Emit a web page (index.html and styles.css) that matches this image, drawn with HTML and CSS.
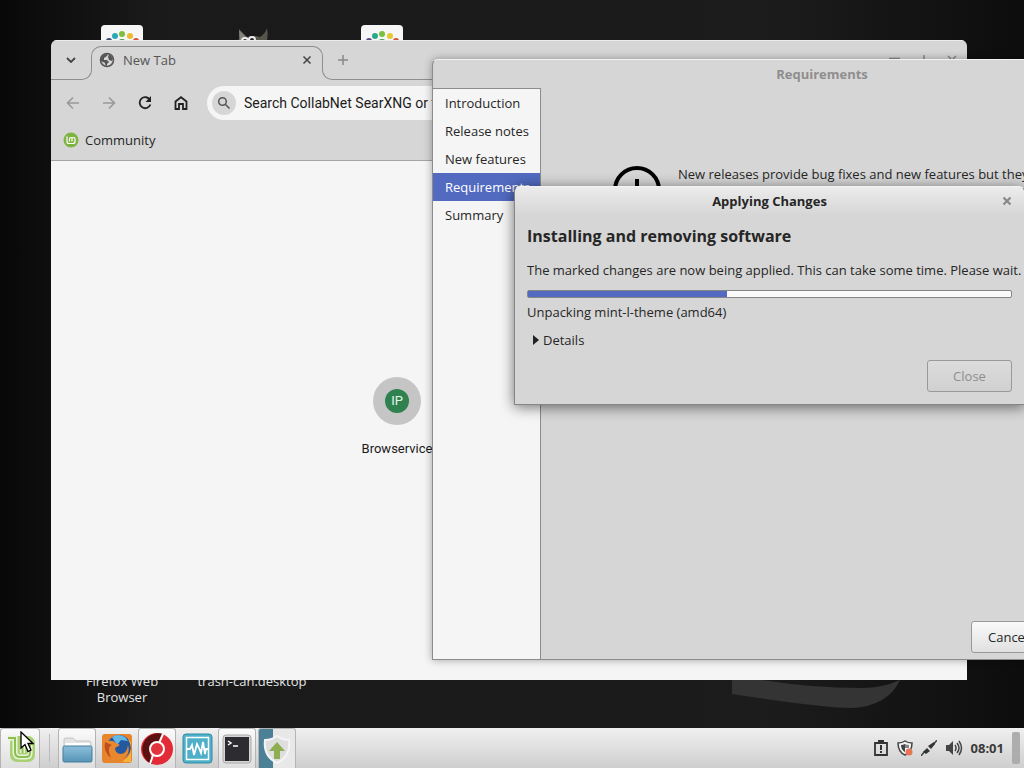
FILE: index.html
```html
<!DOCTYPE html>
<html lang="en">
<head>
<meta charset="utf-8">
<title>Desktop</title>
<link rel="stylesheet" href="styles.css">
</head>
<body>
<main class="desktop">
  <svg class="wallpaper-mark" viewBox="0 0 170 40" aria-hidden="true"><path d="M0 0H30Q80 8 130 8Q150 8 168 0Q156 26 120 28Q90 28 0 14Z" fill="#343434"/></svg>

  <div class="shortcut shortcut-a" aria-hidden="true">
    <svg class="tile" viewBox="0 0 42 42"><rect width="42" height="42" rx="4" fill="#f6f6f6"/><circle cx="14" cy="11" r="3" fill="#28a9b8"/><circle cx="21" cy="9" r="3" fill="#7cbf3f"/><circle cx="29" cy="11" r="3" fill="#efb932"/><circle cx="8" cy="16" r="3" fill="#3b4a73"/><circle cx="35" cy="16" r="3" fill="#d1543b"/><circle cx="21" cy="18" r="4" fill="#4b9a46"/></svg>
  </div>
  <div class="shortcut shortcut-b" aria-hidden="true">
    <svg class="tile" viewBox="0 0 42 42"><path d="M9 4L17 12Q24 10 30 12Q35 9 37 3Q39 14 35 22H7L3 19L9 14Z" fill="#56544b"/><path d="M9 5L17 13L10 18Z" fill="#85837b"/><circle cx="15" cy="16" r="4" fill="#eee"/><circle cx="22" cy="15" r="4" fill="#eee"/><circle cx="15" cy="16" r="2" fill="#222"/><circle cx="22" cy="15" r="2" fill="#222"/></svg>
  </div>
  <div class="shortcut shortcut-c" aria-hidden="true">
    <svg class="tile" viewBox="0 0 42 42"><rect width="42" height="42" rx="4" fill="#f6f6f6"/><circle cx="14" cy="11" r="3" fill="#28a98a"/><circle cx="21" cy="9" r="3" fill="#7cbf3f"/><circle cx="29" cy="11" r="3" fill="#e6c932"/><circle cx="8" cy="16" r="3" fill="#5b4a83"/><circle cx="35" cy="16" r="3" fill="#d1543b"/><circle cx="21" cy="18" r="4" fill="#4b9a46"/></svg>
  </div>
  <div class="shortcut-label label-firefox">Firefox Web Browser</div>
  <div class="shortcut-label label-trash">trash-can.desktop</div>

  <section class="window browser" aria-label="Browser">
    <header class="tab-strip">
      <button class="tab-menu" aria-label="Search tabs"><svg width="10" height="6" viewBox="0 0 10 6"><path d="M1 1L5 5L9 1" fill="none" stroke="#444" stroke-width="1.800"/></svg></button>
      <div class="tab">
        <svg width="16" height="16" viewBox="0 0 16 16"><circle cx="8" cy="8" r="6.500" fill="#d6d6d6" stroke="#555" stroke-width="1.600"/><path d="M2 7Q3 2 9 2L8 4L5 6V8L8 8L10 10L8 12V14Q6 14 6 11L2 9Z" fill="#555"/><path d="M10 2L14 6L13 9L10 8L9 5Z" fill="#555"/></svg>
        <span class="tab-title">New Tab</span>
        <button class="plain" aria-label="Close tab"><svg width="10" height="10" viewBox="0 0 10 10"><path d="M1.500 1.500L8.500 8.500M8.500 1.500L1.500 8.500" stroke="#444" stroke-width="1.500"/></svg></button>
      </div>
      <div class="strip-rest">
        <button class="plain" aria-label="New tab"><svg width="12" height="12" viewBox="0 0 12 12"><path d="M6 1V11M1 6H11" stroke="#888" stroke-width="1.500"/></svg></button>
      </div>
      <div class="caption-buttons" aria-hidden="true">
        <svg width="76" height="10" viewBox="0 0 76 10"><path d="M2 3.500H13M37 0V10M33 5H41M61 1L69 9M69 1L61 9" stroke="#888" stroke-width="1.500"/></svg>
      </div>
    </header>
    <div class="toolbar">
      <button class="plain tool" aria-label="Back"><svg width="14" height="14" viewBox="0 0 14 14"><path d="M13 7H2M7 1.500L1.500 7L7 12.500" fill="none" stroke="#999" stroke-width="1.600"/></svg></button>
      <button class="plain tool" aria-label="Forward"><svg width="14" height="14" viewBox="0 0 14 14"><path d="M1 7H12M7 1.500L12.500 7L7 12.500" fill="none" stroke="#999" stroke-width="1.600"/></svg></button>
      <button class="plain tool" aria-label="Reload"><svg width="14" height="14" viewBox="0 0 14 14"><path d="M12 4A5.500 5.500 0 1 0 12.400 8.500" fill="none" stroke="#222" stroke-width="1.800"/><path d="M13 0V6H7.500Z" fill="#222"/></svg></button>
      <button class="plain tool" aria-label="Home"><svg width="14" height="14" viewBox="0 0 14 14"><path d="M1.500 5.500L7 1.200L12.500 5.500V13H9V8H5V13H1.500Z" fill="none" stroke="#222" stroke-width="1.800"/></svg></button>
      <label class="omnibox">
        <span class="search-badge"><svg width="14" height="14" viewBox="0 0 14 14"><circle cx="5.500" cy="5.500" r="3.800" fill="none" stroke="#555" stroke-width="1.500"/><path d="M8.500 8.500L12.500 12.500" stroke="#555" stroke-width="1.600"/></svg></span>
        <input class="omnibox-input" type="text" aria-label="Address and search" placeholder="Search CollabNet SearXNG or type a URL">
      </label>
    </div>
    <nav class="bookmarks">
      <a class="bookmark" href="#"><svg width="16" height="16" viewBox="0 0 16 16"><circle cx="8" cy="8" r="7.500" fill="#7fb342"/><path d="M4 4.500V9.500Q4 11.500 6 11.500H10Q12 11.500 12 9.500V7Q12 5.500 10.500 5.500T9 7V9.500M9 7Q9 5.500 7.800 5.500T6.500 7V9.500" fill="none" stroke="#fff" stroke-width="1.200"/></svg>Community</a>
    </nav>
    <div class="page">
      <a class="site" href="#"><span class="site-ring"><span class="site-badge">IP</span></span>Browservice</a>
    </div>
  </section>

  <section class="window upgrade" aria-label="Requirements">
    <h1 class="caption caption-idle">Requirements</h1>
    <div class="upgrade-body">
      <nav class="steps">
        <a class="step" href="#">Introduction</a>
        <a class="step" href="#">Release notes</a>
        <a class="step" href="#">New features</a>
        <a class="step step-current" href="#" aria-current="step">Requirements</a>
        <a class="step" href="#">Summary</a>
      </nav>
      <div class="upgrade-content">
        <div class="notice">
          <svg width="48" height="48" viewBox="0 0 48 48"><circle cx="24" cy="24" r="22" fill="none" stroke="#000" stroke-width="4"/><path d="M24 13V28M24 32V36" stroke="#000" stroke-width="4"/></svg>
          <p class="notice-text">New releases provide bug fixes and new features but they also sometimes<br>introduce new issues. Usually these are rare.</p>
        </div>
        <div class="actions"><button class="button">Cancel</button></div>
      </div>
    </div>
  </section>

  <section class="window progress-dialog" role="dialog" aria-labelledby="dialog-title">
    <header class="dialog-header">
      <h1 class="caption" id="dialog-title">Applying Changes</h1>
      <button class="plain dialog-close" aria-label="Close dialog"><svg width="10" height="10" viewBox="0 0 10 10"><path d="M1.500 1.500L8.500 8.500M8.500 1.500L1.500 8.500" stroke="#888" stroke-width="2.200"/></svg></button>
    </header>
    <div class="dialog-body">
      <h2 class="headline">Installing and removing software</h2>
      <p class="message">The marked changes are now being applied. This can take some time. Please wait.</p>
      <div class="meter" role="progressbar" aria-valuenow="41" aria-valuemin="0" aria-valuemax="100" aria-label="Progress"><div class="meter-fill" style="width:41.2%"></div></div>
      <p class="status">Unpacking mint-l-theme (amd64)</p>
      <button class="plain details"><svg width="6" height="10" viewBox="0 0 6 10"><path d="M0 0L6 5L0 10Z" fill="#222"/></svg>Details</button>
      <div class="dialog-actions"><button class="button button-close" disabled>Close</button></div>
    </div>
  </section>
</main>

<footer class="panel">
  <button class="task task-open menu-button" aria-label="Menu"><svg width="32" height="32" viewBox="0 0 32 32"><rect x="6" y="3" width="25" height="26" rx="7" fill="#a9d173"/><path d="M4 5H11V19Q11 24 16 24H22Q26 24 26 20V12M18.500 20V11" fill="none" stroke="#e9f4da" stroke-width="5"/><path d="M4 5H11V19Q11 24 16 24H22Q26 24 26 20V12M18.500 20V11" fill="none" stroke="#8cbd50" stroke-width="2"/></svg></button>
  <span class="divider"></span>
  <button class="task task-open" aria-label="Files"><svg width="32" height="32" viewBox="0 0 32 32"><defs><linearGradient id="fold" x2="0" y2="1"><stop stop-color="#8cc0dc"/><stop offset="1" stop-color="#5794b6"/></linearGradient></defs><path d="M3 7Q3 5 5 5H12L15 8H28Q30 8 30 10V25H3Z" fill="#e4e4e4" stroke="#c4c4c4"/><path d="M4 10H29V15H4Z" fill="#fff"/><rect x="2" y="13" width="29" height="16" rx="1.500" fill="url(#fold)" stroke="#447d9d"/></svg></button>
  <button class="task" aria-label="Firefox"><svg width="32" height="32" viewBox="0 0 32 32"><rect x="1" y="2" width="30" height="29" rx="3" fill="#e8852c"/><circle cx="18" cy="15" r="12" fill="#2459a0"/><path d="M11 5Q17 1 24 5L27 9L20 8L16 13Z" fill="#65b8e5"/><path d="M2 4L7 9Q12 8 15 11L19 13L14 16Q14 21 19 22Q26 22 27 13Q30 22 22 27Q12 32 5 23Q1 15 2 4Z" fill="#e8872e"/><path d="M4 10Q2 20 10 26Q5 15 11 13Z" fill="#bd4e20"/><path d="M27 7Q33 17 27 25L21 30H30V10Z" fill="#f5b43c"/></svg></button>
  <button class="task task-open" aria-label="Chromium"><svg width="32" height="32" viewBox="0 0 32 32"><circle cx="16" cy="16" r="16" fill="#e32b38"/><path d="M11 31A16 16 0 0 1 22 1L19 9L9 20Z" fill="#5b1111"/><path d="M22 1L18 10M12 22L9 31" stroke="#fff" stroke-width="2"/><circle cx="16" cy="16" r="7" fill="#e3343e" stroke="#fff" stroke-width="2"/></svg></button>
  <button class="task" aria-label="System Monitor"><svg width="32" height="32" viewBox="0 0 32 32"><rect x="2" y="2" width="29" height="29" rx="3" fill="#4db0c8" stroke="#318ca4"/><rect x="5.500" y="5.500" width="22" height="22" fill="none" stroke="#fff" stroke-width="1.500"/><path d="M6 17H9L11 13L13 23L16 12L18 16L20 21L22 10L24 22L25 17H27" fill="none" stroke="#fff" stroke-width="1.800"/></svg></button>
  <button class="task task-open" aria-label="Terminal"><svg width="32" height="32" viewBox="0 0 32 32"><rect x="2" y="2" width="28" height="28" rx="3" fill="#d5d5d5" stroke="#aaa"/><rect x="4" y="4" width="24" height="24" fill="#2c2c31"/><path d="M7 8L10 10L7 12M12 13H17" fill="none" stroke="#fff" stroke-width="1.500"/></svg></button>
  <button class="task task-open task-progress" aria-label="Update Manager"><svg width="32" height="32" viewBox="0 0 32 32"><path d="M16 3Q21 7 28 7Q30 23 16 30Q2 23 4 7Q11 7 16 3Z" fill="#dedede" stroke="#f4f4f4" stroke-width="2"/><path d="M16 9L24 18H19V26H13V18H8Z" fill="#8fae52"/></svg></button>
  <div class="tray">
    <svg width="16" height="16" viewBox="0 0 16 16"><path d="M2 3H14V15H2Z" fill="none" stroke="#333" stroke-width="1.800"/><path d="M5 0H11V3H5ZM7 5H9V10H7ZM7 11H9V13H7Z" fill="#333"/></svg>
    <svg width="16" height="16" viewBox="0 0 16 16"><path d="M8 1Q11 3 15 3Q15 12 8 15Q1 12 1 3Q5 3 8 1Z" fill="#f3f3f3" stroke="#444" stroke-width="1.500"/><path d="M8 4V12Q4 10 4 5Q6 5 8 4Z" fill="#444"/><path d="M8 4Q10 5 12 5V8H8Z" fill="#888"/><circle cx="12" cy="12" r="3.500" fill="#e87555"/></svg>
    <svg width="16" height="16" viewBox="0 0 16 16"><path d="M0 16L4 11M12 5L16 0" stroke="#444" stroke-width="1.500"/><path d="M2 12L6 8L9 11L5 14ZM7 6L13 2L14 4L10 9Z" fill="#333"/></svg>
    <svg width="18" height="16" viewBox="0 0 18 16"><path d="M1 5H4L8 1V15L4 11H1Z" fill="#444"/><path d="M10 5Q12 8 10 11M12 3Q16 8 12 13M14 1Q19 8 14 15" fill="none" stroke="#444" stroke-width="1.500"/></svg>
    <time class="clock">08:01</time>
    <span class="show-desktop"></span>
  </div>
</footer>
<svg class="cursor" width="14" height="22" viewBox="0 0 14 22" aria-hidden="true"><path d="M1 1V17L5 13.500L8 20.500L11 19L8 12.500H13Z" fill="#fff" stroke="#000" stroke-width="1.300"/></svg>
</body>
</html>
```
FILE: styles.css
```css
* { box-sizing: border-box; }
body {
  margin: 0;
  height: 100vh;
  display: flex;
  flex-direction: column;
  overflow: hidden;
  font: 13px/20px "Open Sans", "Noto Sans", sans-serif;
  color: #262626;
}
h1, h2, p { margin: 0; }
a { color: inherit; text-decoration: none; }
svg { display: block; flex: none; }
button { font: inherit; color: inherit; }
.plain { border: 0; background: none; padding: 0; display: flex; align-items: center; justify-content: center; }

.desktop {
  flex: 1;
  position: relative;
  overflow: hidden;
  background: linear-gradient(90deg, #080808, #1a1a1a 15%, #1c1c1c 75%, #0d0d0d);
}
.wallpaper-mark { position: absolute; left: 732px; bottom: 8px; width: 170px; }
.shortcut { position: absolute; top: 25px; }
.tile { width: 42px; height: 42px; }
.shortcut-a { left: 101px; }
.shortcut-b { left: 230px; }
.shortcut-c { left: 361px; }
.shortcut-label {
  position: absolute;
  top: 673px;
  width: 120px;
  text-align: center;
  line-height: 16px;
  color: #e4e4e4;
}
.label-firefox { left: 62px; padding: 0 16px; }
.label-trash { left: 192px; }

.window { position: absolute; display: flex; flex-direction: column; background: #d6d6d6; }

.browser { left: 51px; right: 57px; top: 40px; bottom: 48px; border-radius: 6px 6px 0 0; overflow: hidden; }
.tab-strip { display: flex; height: 40px; border-top: 1px solid #ececec; }
.tab-menu {
  width: 41px;
  height: 24px;
  margin-top: 15px;
  padding: 0 0 16px;
  display: flex;
  align-items: center;
  justify-content: center;
  background: none;
  border: 0 solid #8e8e8e;
  border-width: 0 1px 1px 0;
  border-radius: 0 0 10px 0;
}
.tab {
  position: relative;
  width: 232px;
  height: 28px;
  margin: 5px 0 0 -1px;
  padding: 0 11px 0 8px;
  display: flex;
  align-items: center;
  gap: 8px;
}
.tab::before {
  content: "";
  position: absolute;
  inset: 0 0 16px;
  border: 1px solid #8e8e8e;
  border-bottom: 0;
  border-radius: 10px 10px 0 0;
}
.tab-title { flex: 1; color: #555; }
.strip-rest {
  flex: 1;
  height: 24px;
  margin: 15px 0 0 -1px;
  padding: 0 14px 16px;
  display: flex;
  align-items: center;
  border: 0 solid #8e8e8e;
  border-width: 0 0 1px 1px;
  border-radius: 0 0 0 10px;
}
.caption-buttons { height: 39px; padding: 14px 4px 0 0; border-bottom: 1px solid #8e8e8e; }
.toolbar { display: flex; align-items: center; height: 46px; padding: 0 120px 0 4px; }
.tool { width: 36px; height: 34px; }
.omnibox { flex: 1; height: 34px; margin-left: 8px; padding: 0 5px; display: flex; align-items: center; gap: 8px; background: #f5f5f5; border-radius: 17px; }
.search-badge { width: 24px; height: 24px; border-radius: 50%; background: #d6d6d6; display: flex; align-items: center; justify-content: center; }
.omnibox-input { flex: 1; border: 0; padding: 0; background: none; outline: 0; font: 14px/20px Roboto, sans-serif; color: #1c1c1c; }
.omnibox-input::placeholder { color: #1c1c1c; opacity: 1; }
.bookmarks { height: 35px; padding: 4px 12px 0; border-bottom: 1px solid #a4a4a4; }
.bookmark { display: inline-flex; align-items: center; gap: 6px; }
.page { flex: 1; background: #f5f5f5; padding: 216px 220px 0 290px; }
.site { width: 112px; display: flex; flex-direction: column; align-items: center; gap: 14px; font-family: Roboto, sans-serif; color: #1b1b1b; }
.site-ring { width: 48px; height: 48px; border-radius: 50%; background: #c5c5c5; display: flex; align-items: center; justify-content: center; }
.site-badge { width: 24px; height: 24px; border-radius: 50%; background: #2f8150; color: #e6f5ea; text-align: center; line-height: 24px; }

.upgrade { left: 432px; right: -188px; top: 59px; bottom: 68px; border: 1px solid #8c8c8c; border-top-color: #f2f2f2; border-radius: 6px 6px 0 0; box-shadow: 0 0 8px rgba(0, 0, 0, .35); }
.caption { font-size: 13px; line-height: 28px; text-align: center; font-weight: 700; }
.caption-idle { color: #8e8e8e; }
.upgrade-body { flex: 1; display: flex; }
.steps { width: 108px; background: #f5f5f5; border: 0 solid #8c8c8c; border-width: 1px 1px 0 0; }
.step { display: block; padding: 4px 0 4px 12px; white-space: nowrap; overflow: hidden; }
.step-current { background: #526bc0; color: #fff; }
.upgrade-content { flex: 1; min-width: 0; display: flex; flex-direction: column; justify-content: space-between; padding: 78px 12px 6px 72px; }
.notice { display: flex; gap: 17px; }
.notice-text { line-height: 17px; white-space: nowrap; }
.actions { padding-left: 358px; }
.button { height: 32px; padding: 0 16px; border: 1px solid #999; border-radius: 3px; background: linear-gradient(#fafafa, #e0e0e0); }

.progress-dialog { left: 514px; right: -1px; top: 186px; border: 1px solid #858585; border-top-color: #f4f4f4; border-radius: 6px 6px 0 0; box-shadow: 0 2px 14px rgba(0, 0, 0, .55); }
.dialog-header { position: relative; background: linear-gradient(#ececec, #d6d6d6); border-radius: 5px 5px 0 0; }
.dialog-close { position: absolute; right: 12px; top: 9px; }
.dialog-body { display: flex; flex-direction: column; padding: 9px 12px 12px; }
.headline { font-size: 16px; line-height: 24px; }
.message { margin-top: 12px; white-space: nowrap; }
.meter { height: 8px; margin-top: 10px; background: #fafafa; border: 1px solid #858585; border-radius: 2px; }
.meter-fill { height: 100%; background: #526bc0; }
.status { margin-top: 4px; }
.details { align-self: flex-start; margin: 8px 0 0 6px; gap: 4px; }
.dialog-actions { display: flex; justify-content: flex-end; margin-top: 10px; }
.button-close { width: 85px; color: #8e8e8e; background: linear-gradient(#dcdcdc, #d0d0d0); }

.panel { height: 40px; display: flex; background: linear-gradient(#f0f0f0, #cecece); }
.task { width: 38px; height: 40px; margin-right: 2px; padding: 0; border: 0; background: none; display: flex; align-items: center; justify-content: center; border-radius: 3px 3px 0 0; }
.task-open { border: 1px solid #b4b4b4; border-bottom: 0; background: linear-gradient(#fafafa, #dedede); }
.menu-button { width: 40px; margin-right: 0; }
.divider { width: 1px; height: 28px; margin: 6px 8px 0 9px; background: #bbb; }
.task-progress { background: linear-gradient(90deg, #4b8096 14px, #e8e8e8 14px); }
.tray { flex: 1; display: flex; align-items: center; justify-content: flex-end; gap: 8px; padding-right: 4px; }
.clock { font-weight: 700; color: #3a3a3a; }
.show-desktop { width: 8px; height: 32px; border-radius: 2px; background: #adadad; }
.cursor { position: absolute; left: 20px; bottom: 15px; }
```
